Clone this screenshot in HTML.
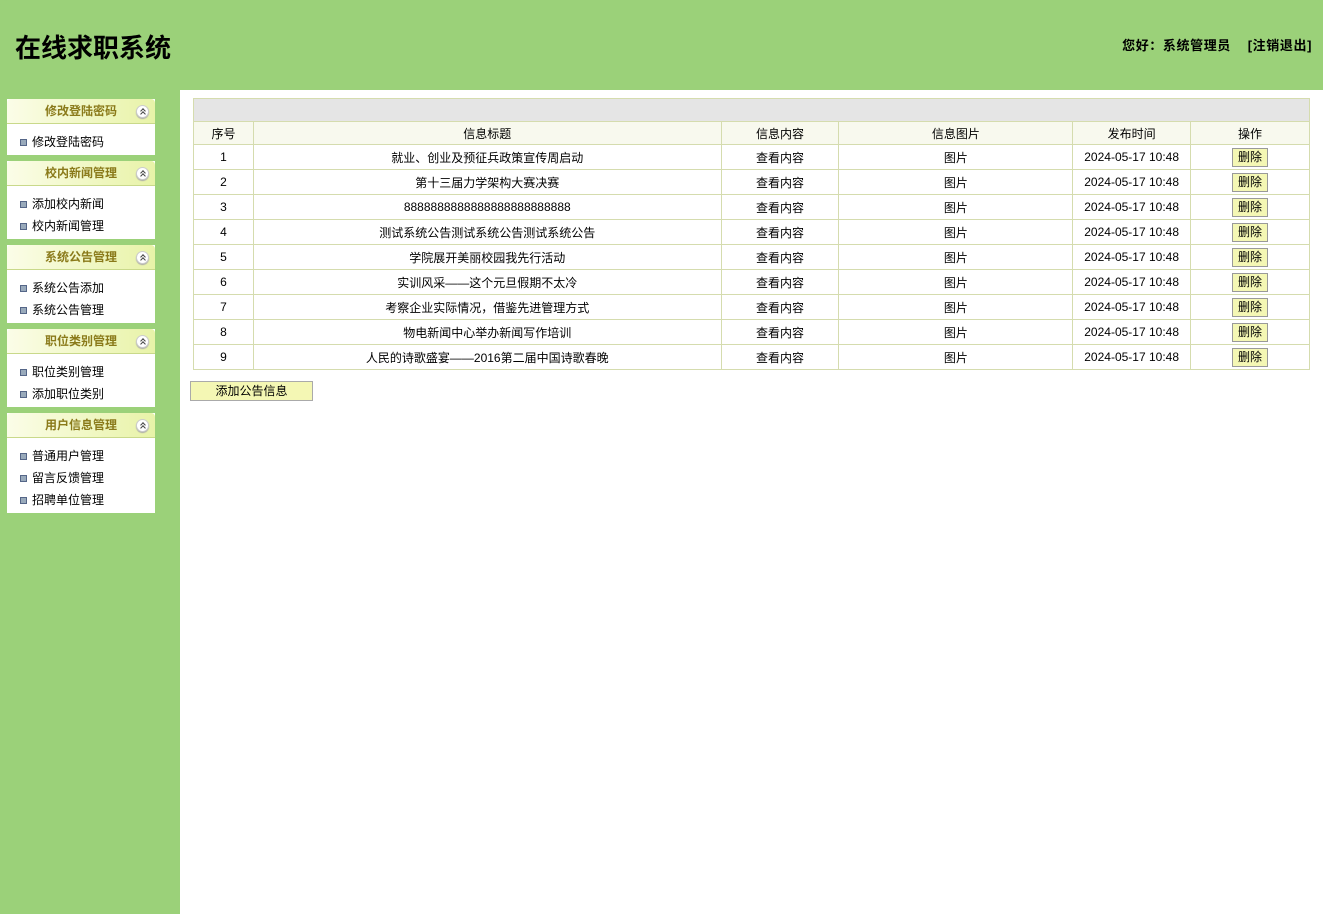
<!DOCTYPE html>
<html><head><meta charset="utf-8"><style>
*{margin:0;padding:0;box-sizing:border-box}
body{width:1323px;height:914px;background:#9bd179;font-family:"Liberation Sans","Noto Sans CJK SC",sans-serif;font-size:12px;color:#000;position:relative;overflow:hidden}
.hd{position:absolute;left:0;top:0;width:1323px;height:90px;background:#9bd179;border-radius:8px 8px 0 0}
.title{position:absolute;left:15px;top:28px;font-size:26px;font-weight:bold}
.user{position:absolute;right:11px;top:35px;font-size:13px;font-weight:bold;letter-spacing:0.6px}
.main{position:absolute;left:180px;top:90px;width:1143px;height:824px;background:#fff}
.panel{position:absolute;left:7px;width:148px;background:#fff}
.ph{height:25px;background:linear-gradient(to right,#fbfde8,#e8f3a8);border-bottom:1px solid #c9d98a;border-radius:4px 4px 0 0;text-align:center;font-weight:bold;color:#8a7a1a;font-size:12px;line-height:25px;position:relative}
.ph i{position:absolute;right:6px;top:6px;width:13px;height:13px;border-radius:50%;background:#fff;border:1px solid #ccc;box-shadow:0 1px 1px #aaa}
.ph i:before,.ph i:after{content:"";position:absolute;left:4px;width:3px;height:3px;border-left:1px solid #444;border-top:1px solid #444;transform:rotate(45deg)}
.ph i:before{top:3px}.ph i:after{top:6px}
.it{height:22px;line-height:22px;padding-left:25px;position:relative}
.it:before{content:"";position:absolute;left:13px;top:8px;width:5px;height:5px;background:#9ab;border:1px solid #568}
table{position:absolute;left:13px;top:8px;width:1117px;border-collapse:collapse}
td{border:1px solid #d5dcae;text-align:center;height:25px;font-size:12px}
tr.g td{background:#e5e5e5;height:23px}
tr.h td{background:#f8f9ee;height:23px}
.b{display:inline-block;background:#f4f7b4;border:1px solid #999;padding:0 5px;line-height:17px;font-size:12px}
.add{position:absolute;left:10px;top:291px;width:123px;height:20px;background:#f4f7b4;border:1px solid #aaa;text-align:center;line-height:18px}
</style></head><body>
<div class="hd"><div class="title">在线求职系统</div><div class="user">您好：系统管理员 &nbsp;&nbsp;&nbsp;[注销退出]</div></div>
<div class="panel" style="top:99px;height:56px"><div class="ph">修改登陆密码<i></i></div><div style="height:7px"></div><div class="it">修改登陆密码</div></div>
<div class="panel" style="top:161px;height:78px"><div class="ph">校内新闻管理<i></i></div><div style="height:7px"></div><div class="it">添加校内新闻</div><div class="it">校内新闻管理</div></div>
<div class="panel" style="top:245px;height:78px"><div class="ph">系统公告管理<i></i></div><div style="height:7px"></div><div class="it">系统公告添加</div><div class="it">系统公告管理</div></div>
<div class="panel" style="top:329px;height:78px"><div class="ph">职位类别管理<i></i></div><div style="height:7px"></div><div class="it">职位类别管理</div><div class="it">添加职位类别</div></div>
<div class="panel" style="top:413px;height:100px"><div class="ph">用户信息管理<i></i></div><div style="height:7px"></div><div class="it">普通用户管理</div><div class="it">留言反馈管理</div><div class="it">招聘单位管理</div></div>
<div class="main">
<table>
<colgroup><col style="width:60px"><col style="width:468px"><col style="width:118px"><col style="width:234px"><col style="width:118px"><col style="width:119px"></colgroup>
<tr class="g"><td colspan="6"></td></tr>
<tr class="h"><td>序号</td><td>信息标题</td><td>信息内容</td><td>信息图片</td><td>发布时间</td><td>操作</td></tr>
<tr><td>1</td><td>就业、创业及预征兵政策宣传周启动</td><td>查看内容</td><td>图片</td><td>2024-05-17 10:48</td><td><span class="b">删除</span></td></tr>
<tr><td>2</td><td>第十三届力学架构大赛决赛</td><td>查看内容</td><td>图片</td><td>2024-05-17 10:48</td><td><span class="b">删除</span></td></tr>
<tr><td>3</td><td>8888888888888888888888888</td><td>查看内容</td><td>图片</td><td>2024-05-17 10:48</td><td><span class="b">删除</span></td></tr>
<tr><td>4</td><td>测试系统公告测试系统公告测试系统公告</td><td>查看内容</td><td>图片</td><td>2024-05-17 10:48</td><td><span class="b">删除</span></td></tr>
<tr><td>5</td><td>学院展开美丽校园我先行活动</td><td>查看内容</td><td>图片</td><td>2024-05-17 10:48</td><td><span class="b">删除</span></td></tr>
<tr><td>6</td><td>实训风采——这个元旦假期不太冷</td><td>查看内容</td><td>图片</td><td>2024-05-17 10:48</td><td><span class="b">删除</span></td></tr>
<tr><td>7</td><td>考察企业实际情况，借鉴先进管理方式</td><td>查看内容</td><td>图片</td><td>2024-05-17 10:48</td><td><span class="b">删除</span></td></tr>
<tr><td>8</td><td>物电新闻中心举办新闻写作培训</td><td>查看内容</td><td>图片</td><td>2024-05-17 10:48</td><td><span class="b">删除</span></td></tr>
<tr><td>9</td><td>人民的诗歌盛宴——2016第二届中国诗歌春晚</td><td>查看内容</td><td>图片</td><td>2024-05-17 10:48</td><td><span class="b">删除</span></td></tr>
</table>
<div class="add">添加公告信息</div>
</div>
</body></html>
